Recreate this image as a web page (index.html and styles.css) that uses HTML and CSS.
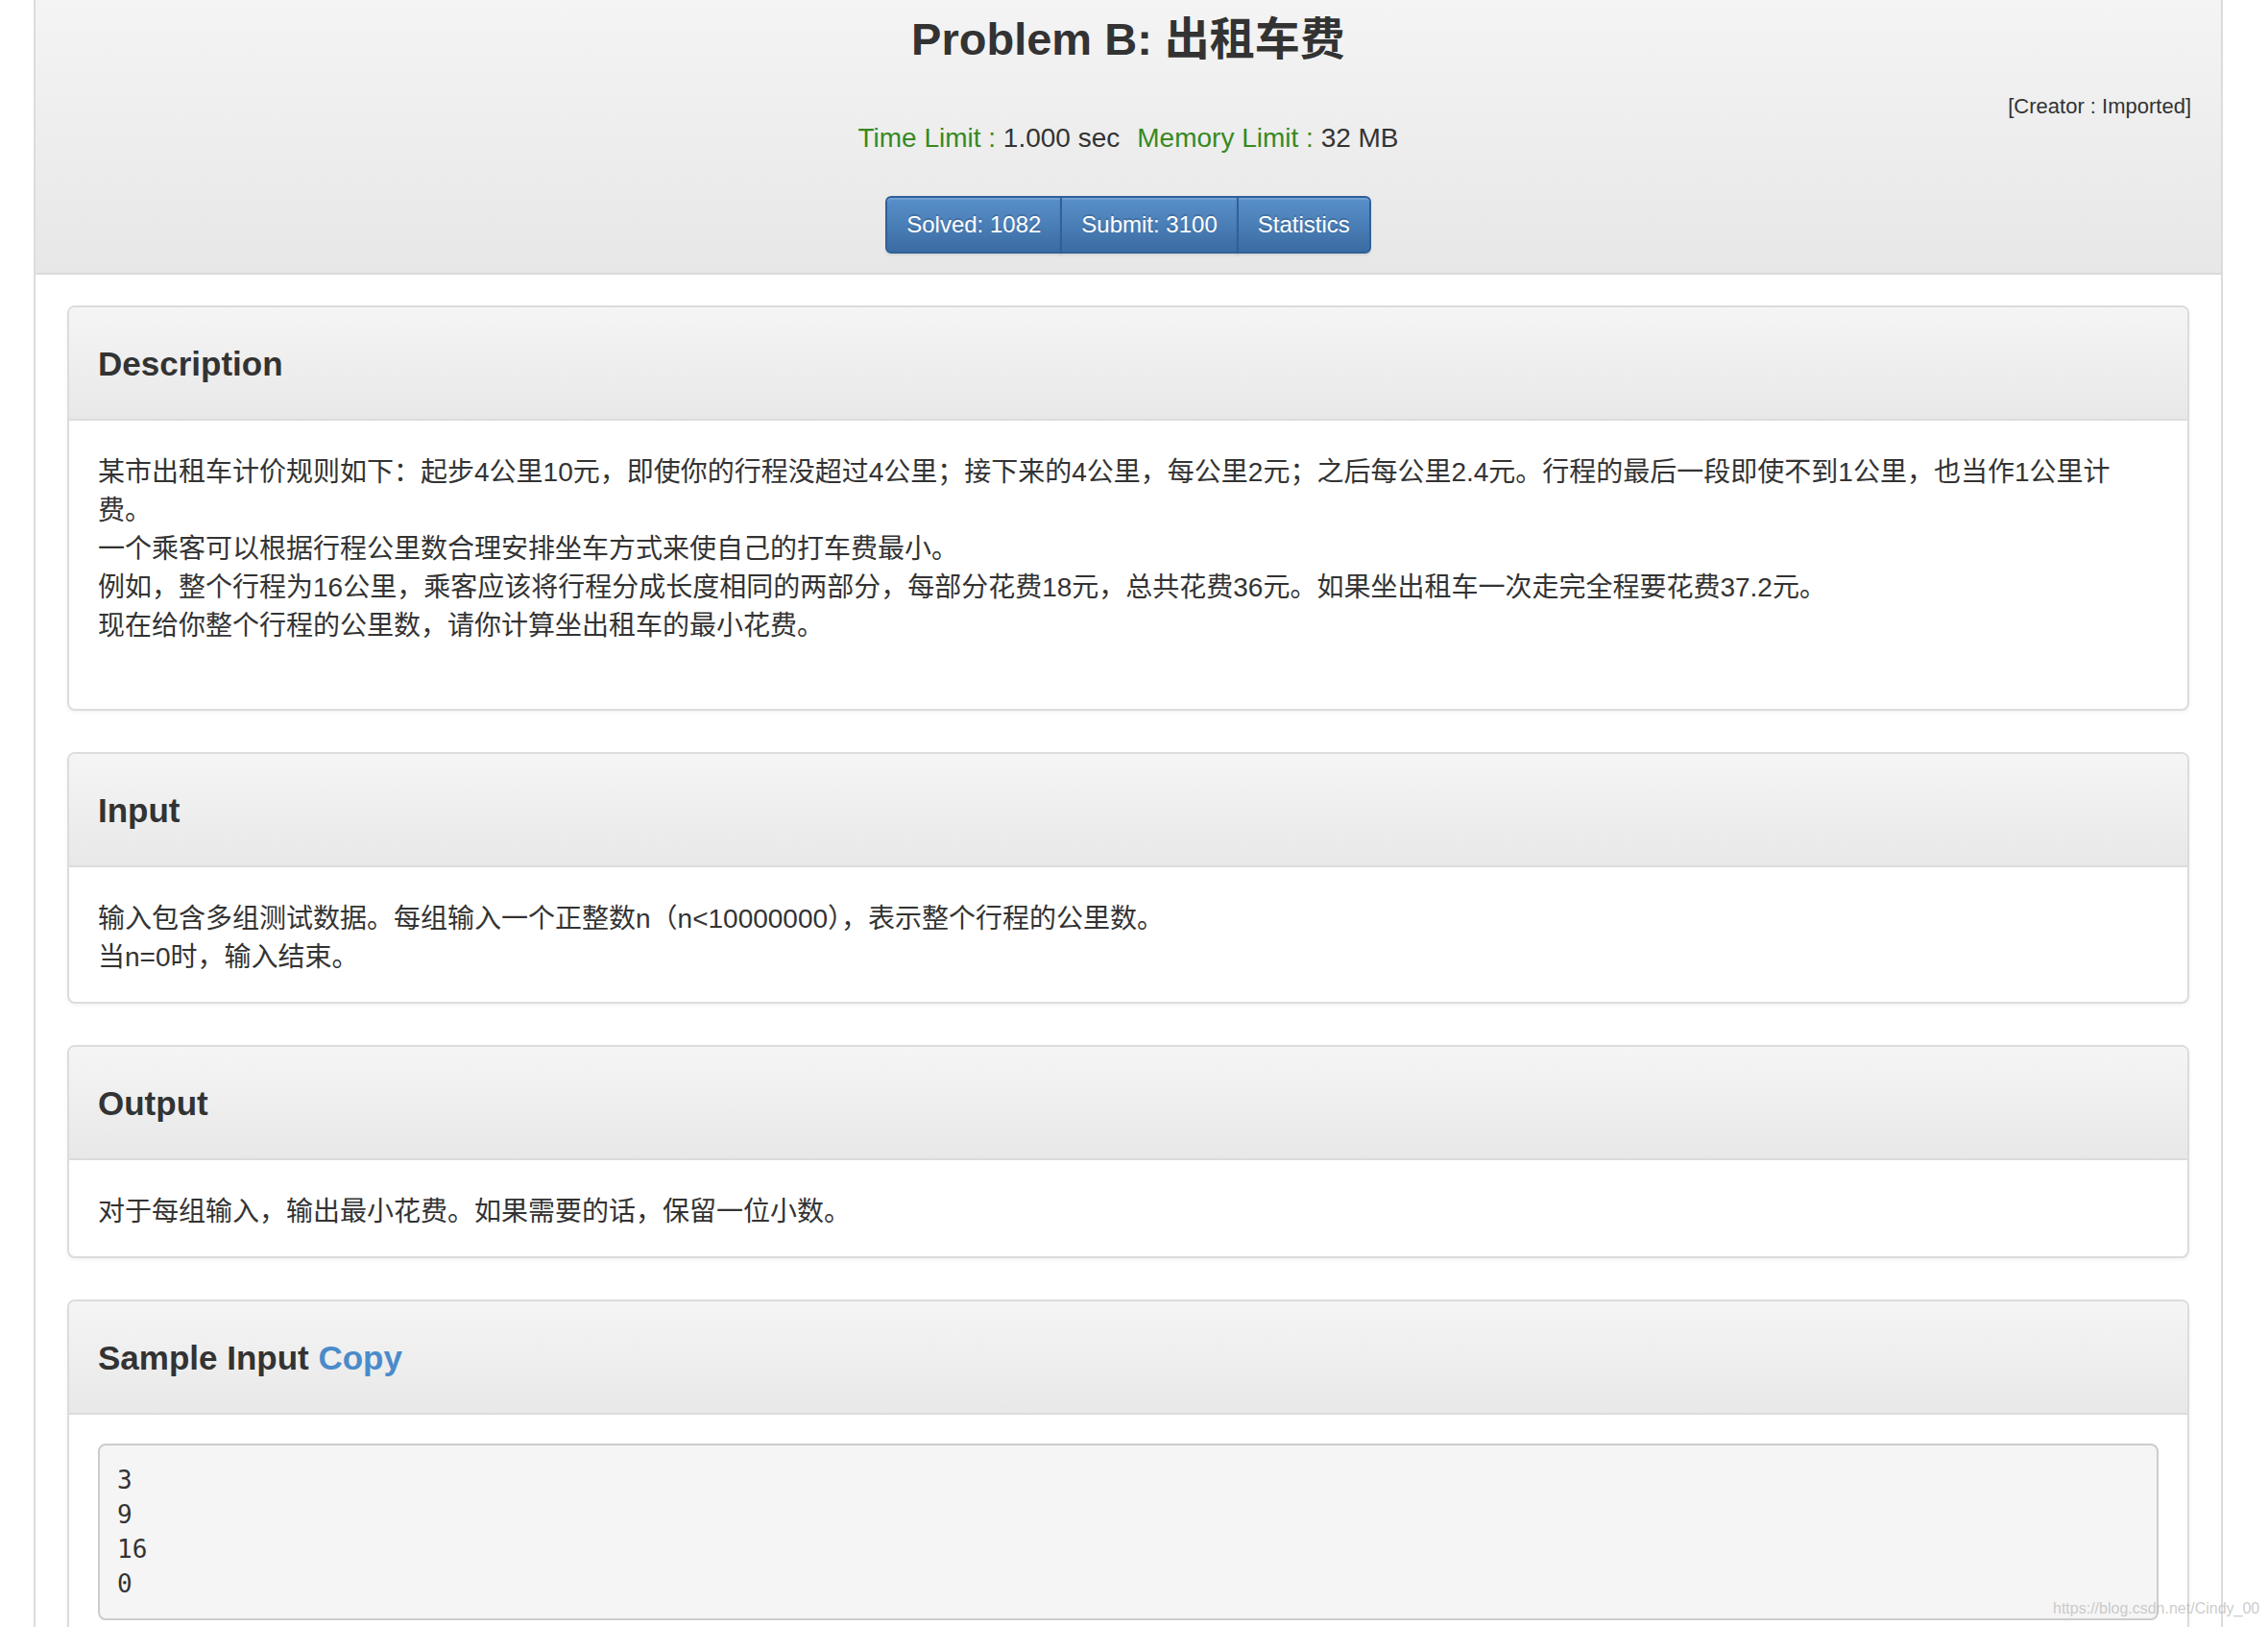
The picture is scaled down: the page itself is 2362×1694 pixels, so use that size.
FILE: index.html
```html
<!DOCTYPE html>
<html lang="zh-CN">
<head>
<meta charset="utf-8">
<title>Problem B: 出租车费</title>
<link rel="stylesheet" href="styles.css">
</head>
<body>
<div class="page">
  <div class="jumbo">
    <h1 class="title">Problem B: 出租车费</h1>
    <div class="creator">[Creator : Imported]</div>
    <div class="limits"><span class="green">Time Limit : </span>1.000 sec<span class="gap"></span><span class="green">Memory Limit : </span>32 MB</div>
    <div class="btn-group">
      <a class="btn">Solved: 1082</a><a class="btn">Submit: 3100</a><a class="btn">Statistics</a>
    </div>
  </div>
  <div class="main">
    <div class="panel">
      <div class="panel-heading"><h4>Description</h4></div>
      <div class="panel-body tall">某市出租车计价规则如下：起步4公里10元，即使你的行程没超过4公里；接下来的4公里，每公里2元；之后每公里2.4元。行程的最后一段即使不到1公里，也当作1公里计费。<br>一个乘客可以根据行程公里数合理安排坐车方式来使自己的打车费最小。<br>例如，整个行程为16公里，乘客应该将行程分成长度相同的两部分，每部分花费18元，总共花费36元。如果坐出租车一次走完全程要花费37.2元。<br>现在给你整个行程的公里数，请你计算坐出租车的最小花费。</div>
    </div>
    <div class="panel">
      <div class="panel-heading"><h4>Input</h4></div>
      <div class="panel-body">输入包含多组测试数据。每组输入一个正整数n（n&lt;10000000），表示整个行程的公里数。<br>当n=0时，输入结束。</div>
    </div>
    <div class="panel">
      <div class="panel-heading"><h4>Output</h4></div>
      <div class="panel-body">对于每组输入，输出最小花费。如果需要的话，保留一位小数。</div>
    </div>
    <div class="panel">
      <div class="panel-heading"><h4>Sample Input <a class="copy">Copy</a></h4></div>
      <div class="panel-body sample-body"><pre class="sample">3
9
16
0</pre></div>
    </div>
  </div>
</div>
<div class="watermark">https://blog.csdn.net/Cindy_00</div>
</body>
</html>
```
FILE: styles.css
```css
html, body {
  margin: 0;
  padding: 0;
  background: #fff;
}
body {
  font-family: "Liberation Sans", "Noto Sans CJK SC", sans-serif;
  color: #333;
  font-size: 28px;
  line-height: 40px;
}
.page {
  margin-left: 35px;
  width: 2280px;
  box-sizing: border-box;
  border-left: 2px solid #dcdcdc;
  border-right: 2px solid #dcdcdc;
  min-height: 1694px;
}
.jumbo {
  background: linear-gradient(to bottom, #f4f4f4 0%, #e7e7e7 100%);
  border-bottom: 2px solid #dadada;
  padding: 13px 31px 20px;
  text-align: center;
}
.title {
  margin: 0;
  font-size: 47px;
  line-height: 56px;
  font-weight: bold;
  color: #333;
}
.creator {
  margin-top: 29px;
  text-align: right;
  font-size: 22px;
  line-height: 26px;
}
.limits {
  font-size: 28px;
  line-height: 40px;
}
.green {
  color: #37891f;
}
.gap {
  display: inline-block;
  width: 18px;
}
.btn-group {
  display: inline-flex;
  margin-top: 40px;
  vertical-align: top;
}
.btn {
  display: block;
  font-size: 24px;
  line-height: 36px;
  padding: 10px 20px;
  border: 2px solid #2f6197;
  color: #fff;
  background: linear-gradient(to bottom, #5990cb 0%, #3b6ca2 100%);
  text-shadow: 0 -2px 0 rgba(0, 0, 0, 0.18);
  box-shadow: inset 0 2px 0 rgba(255, 255, 255, 0.15), 0 2px 2px rgba(0, 0, 0, 0.08);
}
.btn + .btn {
  margin-left: -2px;
}
.btn:first-child {
  border-radius: 6px 0 0 6px;
}
.btn:last-child {
  border-radius: 0 6px 6px 0;
}
.main {
  padding: 32px 33px 0;
}
.panel {
  border: 2px solid #dcdcdc;
  border-radius: 8px;
  margin-bottom: 43px;
  background: #fff;
  box-shadow: 0 2px 4px rgba(0, 0, 0, 0.05);
  overflow: hidden;
}
.panel-heading {
  background: linear-gradient(to bottom, #f5f5f5 0%, #e8e8e8 100%);
  border-bottom: 2px solid #dcdcdc;
  padding: 21px 30px 19px;
}
.panel-heading h4 {
  margin: 20px 0;
  font-size: 35px;
  line-height: 36px;
  font-weight: bold;
  color: #333;
}
.copy {
  color: #4a8bca;
}
.panel-body {
  padding: 34px 30px 26px;
  font-size: 28px;
  line-height: 40px;
}
.panel-body.tall {
  padding-bottom: 66px;
}
.panel-body.sample-body {
  padding: 30px;
}
.sample {
  margin: 0;
  padding: 18px;
  border: 2px solid #cccccc;
  border-radius: 8px;
  background: #f5f5f5;
  font-family: "DejaVu Sans Mono", "Liberation Mono", monospace;
  font-size: 26px;
  line-height: 36px;
  color: #333;
}
.watermark {
  position: absolute;
  left: 2138px;
  top: 1665px;
  font-size: 16px;
  line-height: 20px;
  color: rgba(190, 190, 190, 0.8);
  white-space: nowrap;
}
```
